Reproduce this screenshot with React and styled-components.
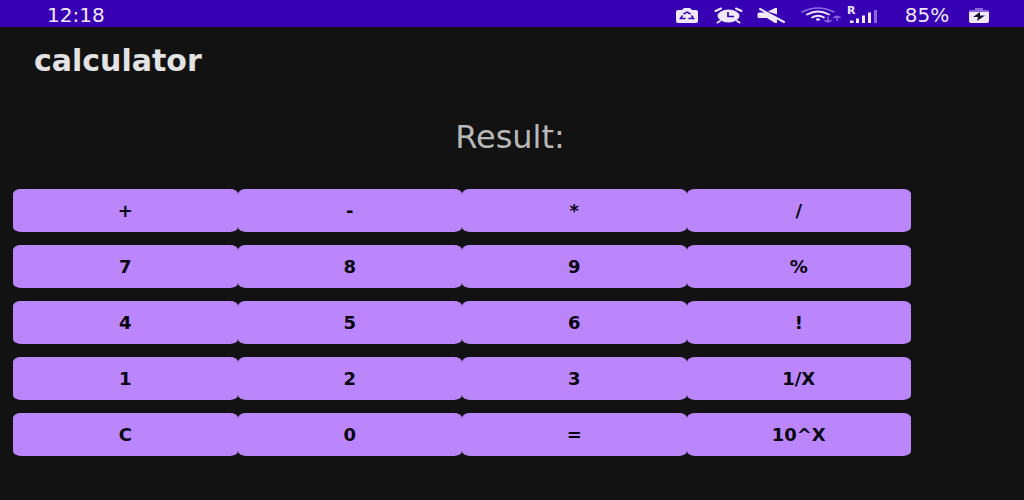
import React from "react";
import styled, { createGlobalStyle } from "styled-components";

const GlobalStyle = createGlobalStyle`
  * { box-sizing: border-box; }
  body {
    margin: 0;
    background: #121212;
    font-family: "DejaVu Sans", Roboto, sans-serif;
  }
`;

const Screen = styled.div`
  min-height: 100vh;
  background: #121212;
`;

const StatusBar = styled.header`
  display: flex;
  align-items: center;
  justify-content: space-between;
  height: 27px;
  padding: 3px 34px 0 47px;
  background: #3700b3;
  color: #f0e8ff;
  font-size: 20px;
  line-height: 24px;
`;

const StatusIcons = styled.div`
  display: flex;
  align-items: center;
`;

const Icon = styled.svg`
  display: block;
  flex: none;
  height: 20px;
  width: ${(p) => p.$width}px;
  margin-right: ${(p) => p.$gap || 0}px;
`;

const Battery = styled.span`
  width: 76px;
  text-align: center;
  margin-right: 3px;
`;

const Title = styled.h1`
  margin: 0;
  padding: 17px 34px 0;
  color: #e3e3e3;
  font-size: 30px;
  font-weight: 700;
  line-height: 34px;
`;

const Result = styled.output`
  display: block;
  padding: 39px 4px 32px 0;
  color: #b8b8b8;
  font-size: 32px;
  line-height: 40px;
  text-align: center;
`;

const Keypad = styled.main`
  display: grid;
  grid-template-columns: repeat(4, 1fr);
  row-gap: 13px;
  padding: 0 113px 40px 13px;
`;

const Key = styled.button`
  height: 43px;
  padding: 0;
  border: 0;
  border-radius: 8px / 5px;
  background: #bb86fc;
  color: #080510;
  font-family: inherit;
  font-size: 18px;
  font-weight: 700;
  cursor: pointer;
`;

const keys = [
  "+", "-", "*", "/",
  "7", "8", "9", "%",
  "4", "5", "6", "!",
  "1", "2", "3", "1/X",
  "C", "0", "=", "10^X",
];

function CameraIcon() {
  return (
    <Icon $width={22} $gap={16} viewBox="0 0 22 20" aria-hidden="true">
      <path fill="#f0e8ff" d="M2 5H6L8 3H14L16 5H20Q22 5 22 7V16Q22 18 20 18H2Q0 18 0 16V7Q0 5 2 5Z" />
      <path fill="none" stroke="#3700b3" strokeWidth="1.5" d="M7.500 9L11 7L14.500 9M6.500 10.500L4.500 13.500H9.500M15.500 10.500L17.500 13.500H12.500" />
    </Icon>
  );
}

function AlarmIcon() {
  return (
    <Icon $width={29} $gap={14} viewBox="0 0 29 20" aria-hidden="true">
      <path stroke="#f0e8ff" strokeWidth="2" strokeLinecap="round" d="M1.5 6L7 3.5M27.5 6L22 3.5M6 16L3.5 17.500M23 16L25.500 17.500" />
      <ellipse cx="14.500" cy="11" rx="11" ry="6.500" fill="#f0e8ff" />
      <path fill="none" stroke="#3700b3" strokeWidth="1.700" d="M14 7V11.500H20" />
    </Icon>
  );
}

function MuteIcon() {
  return (
    <Icon $width={30} $gap={14} viewBox="0 0 30 20" aria-hidden="true">
      <path fill="#f0e8ff" d="M2 7.500H8L20 13V18H18L10 13H2Q0.500 13 0.500 11.500V9Q0.500 7.500 2 7.500ZM11 6.500L18 3H20V9.500Z" />
      <path stroke="#f0e8ff" strokeWidth="2" strokeLinecap="round" d="M3 4L27 17" />
    </Icon>
  );
}

function WifiIcon() {
  return (
    <Icon $width={40} $gap={6} viewBox="0 0 40 20" aria-hidden="true">
      <g fill="none" strokeLinecap="round">
        <path stroke="#8c68df" strokeWidth="1.600" d="M1 7Q17 -1 33 7" />
        <path stroke="#f0e8ff" strokeWidth="1.800" d="M6 9.500Q17 3.500 28 9.500M11 12.500Q17 9 23 12.500" />
        <path stroke="#8c68df" strokeWidth="1.500" d="M27 12V17M24 15.500L27 17L30 15.500M36 15.500V11M33 12.500L36 11L39 12.500" />
      </g>
      <ellipse cx="17" cy="14.500" rx="2" ry="1.300" fill="#f0e8ff" />
    </Icon>
  );
}

const RoamingSignal = styled.span`
  display: grid;
  width: 30px;
  height: 20px;
  margin-right: 12px;
  font-size: 11px;
  font-weight: 700;
  line-height: 12px;

  > * {
    grid-area: 1 / 1;
  }
`;

function SignalIcon() {
  return (
    <RoamingSignal>
      <span>R</span>
      <Icon $width={30} viewBox="0 0 30 20" aria-hidden="true">
        <path fill="#f0e8ff" d="M3 15.500H6.500V18H3ZM9 13.500H12V18H9ZM15 10.500H18V18H15ZM21 7.500H24V18H21Z" />
        <path fill="#8c68df" d="M27 5H30V18H27Z" />
      </Icon>
    </RoamingSignal>
  );
}

function BatteryIcon() {
  return (
    <Icon $width={22} viewBox="0 0 22 20" aria-hidden="true">
      <path fill="#8c68df" d="M7 3H15V5H20Q21 5 21 7H1Q1 5 2 5H7Z" />
      <path fill="#f0e8ff" d="M1 7H21V16Q21 18 19 18H3Q1 18 1 16Z" />
      <path fill="#17102c" d="M12 7L5 12H10L9 16L17 10.500H12Z" />
    </Icon>
  );
}

export default function App() {
  return (
    <Screen>
      <GlobalStyle />
      <StatusBar>
        <time>12:18</time>
        <StatusIcons>
          <CameraIcon />
          <AlarmIcon />
          <MuteIcon />
          <WifiIcon />
          <SignalIcon />
          <Battery>85%</Battery>
          <BatteryIcon />
        </StatusIcons>
      </StatusBar>
      <Title>calculator</Title>
      <Result>Result:</Result>
      <Keypad>
        {keys.map((key) => (
          <Key key={key} type="button">{key}</Key>
        ))}
      </Keypad>
    </Screen>
  );
}
